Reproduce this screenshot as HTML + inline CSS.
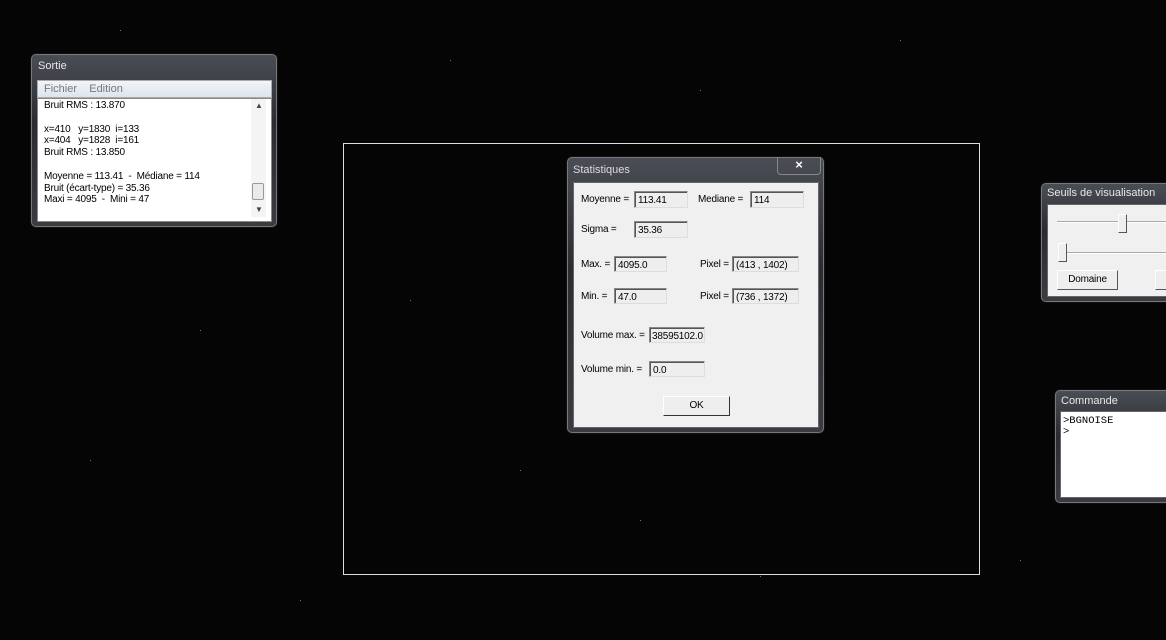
<!DOCTYPE html>
<html><head><meta charset="utf-8"><style>
*{margin:0;padding:0;box-sizing:border-box}
body{width:1166px;height:640px;background:#050505;position:relative;overflow:hidden;font-family:"Liberation Sans",sans-serif;font-size:10px;letter-spacing:-0.2px;color:#000}
.a{position:absolute}
.win{position:absolute;border:1px solid #777;border-radius:5px;background:linear-gradient(#4a4d55,#2a2c31 40%,#3a3c41);box-shadow:0 0 0 1px #111}
.title{position:absolute;color:#e8e8e8;font-size:11px;letter-spacing:0}
.box{position:absolute;background:#eee;border:1px solid #888;border-right-color:#ddd;border-bottom-color:#ddd;box-shadow:inset 1px 1px 0 #555;padding:2px 0 0 3px;line-height:13px;font-size:10px}
.lbl{position:absolute;line-height:12px}
.star{position:absolute;width:1px;height:1px;background:#777}
</style></head><body>
<div class="a" style="left:343px;top:143px;width:637px;height:432px;border:1px solid #ddd"></div>

<!-- Sortie -->
<div class="win" style="left:31px;top:54px;width:246px;height:173px"></div>
<div class="title" style="left:38px;top:60px">Sortie</div>
<div class="a" style="left:37px;top:80px;width:235px;height:18px;background:linear-gradient(#f2f5f9,#dde4ee);border:1px solid #aaa"></div>
<div class="a" style="left:44px;top:83px;color:#777;font-size:11px;letter-spacing:0">Fichier&nbsp;&nbsp;&nbsp;&nbsp;Edition</div>
<div class="a" style="left:37px;top:98px;width:235px;height:124px;background:#fff;border:1px solid #888"></div>
<div class="a" style="left:44px;top:100px;line-height:11.8px;font-size:10px;white-space:pre">Bruit RMS : 13.870

x=410   y=1830  i=133
x=404   y=1828  i=161
Bruit RMS : 13.850

Moyenne = 113.41  -  Médiane = 114
Bruit (écart-type) = 35.36
Maxi = 4095  -  Mini = 47</div>
<div class="a" style="left:251px;top:99px;width:15px;height:118px;background:#f4f4f4"></div>
<div class="a" style="left:255px;top:101px;font-size:8px;color:#444">▲</div>
<div class="a" style="left:255px;top:205px;font-size:8px;color:#444">▼</div>
<div class="a" style="left:252px;top:183px;width:12px;height:17px;background:#eaeaea;border:1px solid #999;border-radius:2px"></div>

<!-- Statistiques -->
<div class="win" style="left:567px;top:157px;width:257px;height:276px"></div>
<div class="title" style="left:573px;top:164px;color:#ddd">Statistiques</div>
<div class="a" style="left:777px;top:157px;width:44px;height:18px;border:1px solid #888;border-top:none;border-radius:0 0 4px 4px;color:#fff;font-weight:bold;font-size:13px;text-align:center;line-height:16px">×</div>
<div class="a" style="left:573px;top:182px;width:246px;height:246px;background:#f0f0f0;border:1px solid #666"></div>
<div class="lbl" style="left:581px;top:194px">Moyenne =</div>
<div class="box" style="left:634px;top:191px;width:54px;height:17px">113.41</div>
<div class="lbl" style="left:698px;top:194px">Mediane =</div>
<div class="box" style="left:750px;top:191px;width:54px;height:17px">114</div>
<div class="lbl" style="left:581px;top:224px">Sigma =</div>
<div class="box" style="left:634px;top:221px;width:54px;height:17px">35.36</div>
<div class="lbl" style="left:581px;top:259px">Max. =</div>
<div class="box" style="left:614px;top:256px;width:53px;height:16px">4095.0</div>
<div class="lbl" style="left:700px;top:259px">Pixel =</div>
<div class="box" style="left:732px;top:256px;width:67px;height:16px">(413 , 1402)</div>
<div class="lbl" style="left:581px;top:291px">Min. =</div>
<div class="box" style="left:614px;top:288px;width:53px;height:16px">47.0</div>
<div class="lbl" style="left:700px;top:291px">Pixel =</div>
<div class="box" style="left:732px;top:288px;width:67px;height:16px">(736 , 1372)</div>
<div class="lbl" style="left:581px;top:330px">Volume max. =</div>
<div class="box" style="left:649px;top:327px;width:56px;height:16px;padding-left:2px">38595102.0</div>
<div class="lbl" style="left:581px;top:364px">Volume min. =</div>
<div class="box" style="left:649px;top:361px;width:56px;height:16px">0.0</div>
<div class="a" style="left:663px;top:396px;width:67px;height:20px;background:#eee;border:1px solid #fff;border-right-color:#333;border-bottom-color:#333;text-align:center;line-height:18px">OK</div>

<!-- Seuils -->
<div class="win" style="left:1041px;top:183px;width:140px;height:119px"></div>
<div class="title" style="left:1047px;top:187px">Seuils de visualisation</div>
<div class="a" style="left:1047px;top:204px;width:130px;height:93px;background:#f0f0f0;border:1px solid #666"></div>
<div class="a" style="left:1057px;top:221px;width:120px;height:2px;background:#aaa;border-bottom:1px solid #fff"></div>
<div class="a" style="left:1118px;top:214px;width:9px;height:19px;background:#eee;border:1px solid #fff;border-right-color:#555;border-bottom-color:#555"></div>
<div class="a" style="left:1061px;top:252px;width:120px;height:2px;background:#aaa;border-bottom:1px solid #fff"></div>
<div class="a" style="left:1058px;top:243px;width:9px;height:19px;background:#eee;border:1px solid #fff;border-right-color:#555;border-bottom-color:#555"></div>
<div class="a" style="left:1057px;top:270px;width:61px;height:20px;background:#eee;border:1px solid #fff;border-right-color:#555;border-bottom-color:#555;text-align:center;line-height:18px">Domaine</div>
<div class="a" style="left:1155px;top:270px;width:30px;height:20px;background:#eee;border:1px solid #fff;border-right-color:#555;border-bottom-color:#555"></div>

<!-- Commande -->
<div class="win" style="left:1055px;top:390px;width:130px;height:113px"></div>
<div class="title" style="left:1061px;top:395px">Commande</div>
<div class="a" style="left:1060px;top:411px;width:120px;height:87px;background:#fff;border:1px solid #666"></div>
<div class="a" style="left:1063px;top:416px;font-family:'Liberation Mono',monospace;font-size:10.5px;line-height:11px;letter-spacing:0">&gt;BGNOISE<br>&gt;</div>

<div class="star" style="left:120px;top:30px"></div><div class="star" style="left:450px;top:60px"></div>
<div class="star" style="left:700px;top:90px"></div><div class="star" style="left:900px;top:40px"></div>
<div class="star" style="left:200px;top:330px"></div><div class="star" style="left:90px;top:460px"></div>
<div class="star" style="left:520px;top:470px"></div><div class="star" style="left:760px;top:576px"></div>
<div class="star" style="left:1020px;top:560px"></div><div class="star" style="left:410px;top:300px"></div>
<div class="star" style="left:640px;top:520px"></div><div class="star" style="left:300px;top:600px"></div>
</body></html>
